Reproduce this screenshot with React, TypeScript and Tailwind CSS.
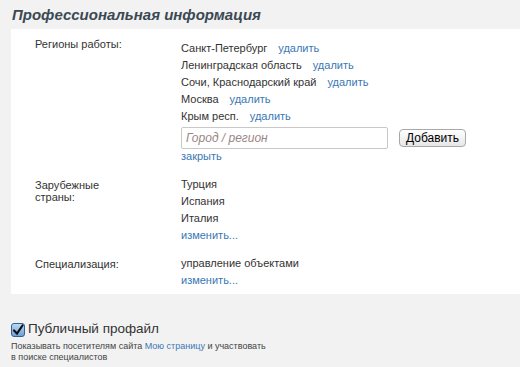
const font = { fontFamily: '"Liberation Sans", Arial, sans-serif' };

interface RowProps {
  label: React.ReactNode;
  labelPad?: string;
  children?: React.ReactNode;
}

const Row: React.FC<RowProps> = ({ label, labelPad, children }) => {
  return (
    <div className="flex">
      <div className={`w-[170px] shrink-0 pl-[24px] leading-[12px] ${labelPad ?? ''}`}>{label}</div>
      <div className="flex flex-col">{children}</div>
    </div>
  );
};

const Link: React.FC<{ children?: React.ReactNode; className?: string }> = ({ children, className }) => (
  <a className={`text-[#3a78b4] ${className ?? ''}`}>{children}</a>
);

const Item: React.FC<{ name: string; del?: boolean }> = ({ name, del }) => (
  <div className="h-[17px] leading-[17px]">
    {name}
    {del && <Link className="ml-[11px]">удалить</Link>}
  </div>
);

export default function App() {
  const regions = ['Санкт-Петербург', 'Ленинградская область', 'Сочи, Краснодарский край', 'Москва', 'Крым респ.'];
  return (
    <div className="w-[520px] h-[367px] bg-[#f2f2f2] text-[#333] text-[11px] overflow-hidden" style={font}>
      <h2 className="pl-[12px] pt-[6px] h-[29px] text-[15px] font-bold italic text-[#3b4852] leading-[18px]">
        Профессиональная информация
      </h2>
      <div className="ml-[11px] bg-white h-[265px] pt-[9px]">
        <Row label="Регионы работы:">
          <div className="pt-[2px]">
            {regions.map((r) => (
              <Item key={r} name={r} del />
            ))}
          </div>
          <div className="flex items-center mt-[2px] h-[22px]">
            <input
              className="w-[207px] h-[22px] border border-[#c8c8c8] rounded-[2px] px-[4px] italic text-[12px] text-[#333] placeholder:text-[#9a8585] outline-none"
              placeholder="Город / регион"
              style={font}
            />
            <button className="ml-[11px] w-[67px] h-[18px] border border-[#a8a8a8] rounded-[4px] bg-gradient-to-b from-white to-[#e6e6e6] text-[12px] text-black leading-[16px]">
              Добавить
            </button>
          </div>
          <div className="h-[14px] leading-[14px]">
            <Link>закрыть</Link>
          </div>
        </Row>
        <div className="h-[13px]" />
        <Row
          labelPad="pt-[3px]"
          label={
            <>
              Зарубежные
              <br />
              страны:
            </>
          }
        >
          <Item name="Турция" />
          <Item name="Испания" />
          <Item name="Италия" />
          <div className="h-[17px] leading-[17px]">
            <Link>изменить...</Link>
          </div>
        </Row>
        <div className="h-[11px]" />
        <Row labelPad="pt-[3px]" label="Специализация:">
          <Item name="управление объектами" />
          <div className="h-[17px] leading-[17px]">
            <Link>изменить...</Link>
          </div>
        </Row>
      </div>
      <div className="pl-[11px] pt-[28px]">
        <label className="flex items-center h-[15px] text-[13.5px] text-[#333]">
          <span className="w-[14px] h-[14px] rounded-[3px] border border-[#2f5f94] bg-gradient-to-b from-[#bcd8f5] to-[#6f9fd6] flex items-center justify-center">
            <svg width="12" height="12" viewBox="0 0 12 12">
              <path d="M2 6.5 L5 9.5 L10.5 1.5" fill="none" stroke="#111" strokeWidth="2.2" strokeLinecap="round" />
            </svg>
          </span>
          <span className="ml-[3px]">Публичный профайл</span>
        </label>
        <p className="mt-[4px] text-[9px] leading-[11px] text-[#444]">
          Показывать посетителям сайта <Link>Мою страницу</Link> и участвовать
          <br />в поиске специалистов
        </p>
      </div>
    </div>
  );
}
